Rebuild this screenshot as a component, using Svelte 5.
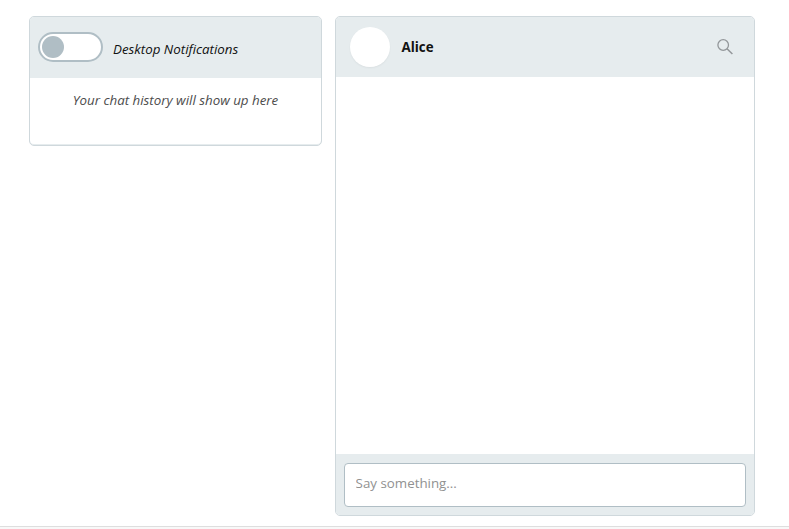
<script>
  let notifications = $state(false);
  let message = $state('');
</script>

<div class="page">
  <main>
    <aside class="panel history">
      <header>
        <button class="toggle" class:on={notifications} aria-label="Desktop Notifications" onclick={() => (notifications = !notifications)}>
          <span class="knob"></span>
        </button>
        <span class="label">Desktop Notifications</span>
      </header>
      <p>Your chat history will show up here</p>
    </aside>
    <section class="panel chat">
      <header>
        <div class="avatar"></div>
        <strong>Alice</strong>
        <svg width="18" height="18" viewBox="0 0 18 18" fill="none" stroke="#93979a">
          <circle cx="7.2" cy="7" r="5.3" stroke-width="1.3" />
          <path d="M11 10.8 L16.4 16" stroke-width="1.5" />
        </svg>
      </header>
      <div class="messages"></div>
      <footer>
        <input bind:value={message} placeholder="Say something..." />
      </footer>
    </section>
  </main>
  <div class="bottom"></div>
</div>

<style>
  :global(body) {
    background: #fff;
    overflow: hidden;
  }
  .page {
    box-sizing: border-box;
    height: 529px;
    padding-top: 16px;
    font-family: 'Open Sans', sans-serif;
    font-size: 13.33px;
    color: #111;
  }
  main {
    display: flex;
    align-items: flex-start;
    gap: 13px;
    padding-left: 29px;
    height: 510px;
  }
  .panel {
    box-sizing: border-box;
    border: 1px solid #cfd8dc;
    border-radius: 5px;
    overflow: hidden;
    background: #fff;
  }
  header {
    display: flex;
    align-items: center;
    box-sizing: border-box;
    background: #e6ecee;
  }
  .history {
    width: 293px;
    height: 130px;
    box-shadow: inset 0 -1px #e6ecee;
  }
  .history header {
    height: 61px;
    padding: 0 0 1px 8px;
  }
  .toggle {
    box-sizing: border-box;
    width: 65px;
    height: 30px;
    padding: 2px;
    border: 2px solid #b0bec5;
    border-radius: 15px;
    background: #fff;
    display: flex;
  }
  .toggle.on {
    justify-content: flex-end;
  }
  .knob {
    width: 22px;
    height: 22px;
    border-radius: 50%;
    background: #b0bec5;
  }
  .label {
    margin: 4px 0 0 10px;
    line-height: 18px;
    font-style: italic;
  }
  .history p {
    margin: 13px 0 0;
    line-height: 18px;
    text-align: center;
    font-style: italic;
    color: #4c4c4c;
  }
  .chat {
    display: flex;
    flex-direction: column;
    width: 420px;
    height: 500px;
  }
  .chat header {
    height: 60px;
    padding: 0 20px 0 14px;
  }
  .avatar {
    width: 40px;
    height: 40px;
    border-radius: 50%;
    background: #fff;
    box-shadow: 0 1px 2px rgba(0, 0, 0, 0.05);
  }
  strong {
    margin-left: 11.5px;
    line-height: 18px;
    font-weight: 700;
  }
  svg {
    margin-left: auto;
  }
  .messages {
    flex: 1;
  }
  footer {
    box-sizing: border-box;
    height: 61px;
    padding: 9px 8px 8px;
    background: #e6ecee;
  }
  input {
    display: block;
    box-sizing: border-box;
    width: 100%;
    height: 44px;
    margin: 0;
    padding: 0 10px 4px 10.6px;
    border: 1px solid #b0bec5;
    border-radius: 4px;
    outline: none;
    background: #fff;
    font: inherit;
    color: #111;
  }
  input::placeholder {
    color: #919191;
    opacity: 1;
  }
  .bottom {
    height: 2px;
    border-top: 1px solid #dedede;
    background: #f8f8f8;
  }
</style>
